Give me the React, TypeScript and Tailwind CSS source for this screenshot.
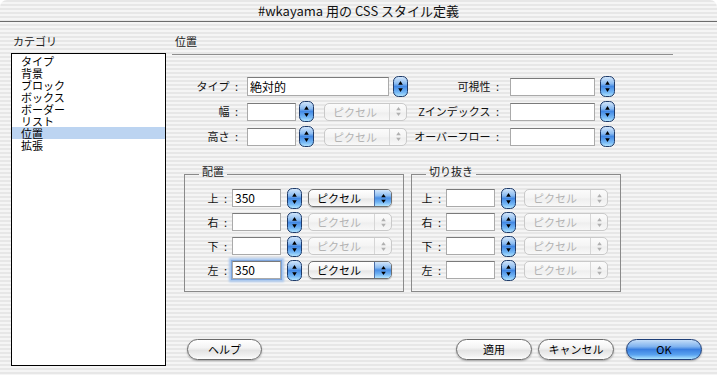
import React from "react";

const aqua =
  "bg-[image:linear-gradient(180deg,#d2e6fb_0%,#8dbdf2_35%,#4a8fe6_50%,#6fb2f3_75%,#b6e6ff_100%)]";

function Stepper() {
  return (
    <svg width="15" height="21" viewBox="0 0 15 21" className="shrink-0 block">
      <defs>
        <linearGradient id="stepg" x1="0" y1="0" x2="0" y2="1">
          <stop offset="0" stopColor="#d6e8fb" />
          <stop offset="0.35" stopColor="#8cbcf1" />
          <stop offset="0.5" stopColor="#4389e4" />
          <stop offset="0.8" stopColor="#77b9f5" />
          <stop offset="1" stopColor="#b8e8ff" />
        </linearGradient>
      </defs>
      <rect x="0.5" y="0.5" width="14" height="20" rx="5" fill="url(#stepg)" stroke="#1f3b69" />
      <path d="M7.5 5 L9.8 8.8 L5.2 8.8 Z" fill="#000" />
      <path d="M7.5 16 L9.8 12.2 L5.2 12.2 Z" fill="#000" />
    </svg>
  );
}

function SmallArrows({ color }: { color: string }) {
  return (
    <svg width="7" height="11" viewBox="0 0 7 11" className="block">
      <path d="M3.5 1 L5.8 4.2 L1.2 4.2 Z" fill={color} />
      <path d="M3.5 10 L5.8 6.8 L1.2 6.8 Z" fill={color} />
    </svg>
  );
}

function Popup({ enabled, w = 84 }: { enabled?: boolean; w?: number }) {
  if (enabled) {
    return (
      <div
        className="flex items-stretch h-[18px] rounded-[5px] border border-[#6f6f6f] overflow-hidden bg-[image:linear-gradient(180deg,#ffffff_0%,#f3f3f3_50%,#e6e6e6_55%,#fafafa_100%)] shadow-[0_1px_1px_rgba(0,0,0,0.25)] shrink-0"
        style={{ width: w }}
      >
        <span className="flex-1 pl-[8px] text-[11px] leading-[16px] text-black">ピクセル</span>
        <span className={`w-[17px] border-l border-[#4a6ea8] flex items-center justify-center ${aqua}`}>
          <SmallArrows color="#000" />
        </span>
      </div>
    );
  }
  return (
    <div
      className="flex items-stretch h-[18px] rounded-[5px] border border-[#c9c9c9] overflow-hidden bg-[image:linear-gradient(180deg,#fbfbfb_0%,#f4f4f4_50%,#eeeeee_55%,#f8f8f8_100%)] shrink-0"
      style={{ width: w }}
    >
      <span className="flex-1 pl-[8px] text-[11px] leading-[16px] text-[#b3b3b3]">ピクセル</span>
      <span className="w-[17px] border-l border-[#d6d6d6] flex items-center justify-center">
        <SmallArrows color="#b0b0b0" />
      </span>
    </div>
  );
}

function Input({ w, value, focused, h = 18 }: { w: number; value?: string; focused?: boolean; h?: number }) {
  return (
    <div
      className={`bg-white border border-[#aaaaaa] border-t-[#7a7a7a] px-[2px] text-[12px] text-black flex items-center shrink-0 ${
        focused ? "shadow-[0_0_0_1px_#7ea5dc,0_0_2px_3px_#aac8ee]" : ""
      }`}
      style={{ width: w, height: h }}
    >
      {value}
    </div>
  );
}

function Button({ label, primary, w = 76 }: { label: string; primary?: boolean; w?: number }) {
  return (
    <div
      className={`h-[21px] rounded-full flex items-center justify-center text-[11px] text-black shadow-[0_1px_2px_rgba(0,0,0,0.3)] ${
        primary
          ? "border border-[#1f3f78] bg-[image:linear-gradient(180deg,#c3ddf8_0%,#7fb2ef_35%,#3a7fe0_50%,#5aa3f0_78%,#b0e6ff_100%)]"
          : "border border-[#6a6a6a] bg-[image:linear-gradient(180deg,#ffffff_0%,#f4f4f4_40%,#e3e3e3_55%,#f2f2f2_85%,#ffffff_100%)]"
      }`}
      style={{ width: w }}
    >
      {label}
    </div>
  );
}

function TopLabel({ text, w, pr = 0 }: { text: string; w: number; pr?: number }) {
  return (
    <span
      className="text-[11px] text-right text-[#111] shrink-0 whitespace-nowrap"
      style={{ width: w, paddingRight: pr }}
    >
      {text}
      {"\u2002:"}
    </span>
  );
}

function GroupRow({ label, value, enabled, focused, popMl = 6 }: { label: string; value?: string; enabled?: boolean; focused?: boolean; popMl?: number }) {
  return (
    <div className="flex items-center h-[24px]">
      <TopLabel text={label} w={24} pr={2} />
      <div className="ml-[3px]">
        <Input w={49} value={value} focused={focused} />
      </div>
      <div className="ml-[6px]">
        <Stepper />
      </div>
      <div style={{ marginLeft: popMl }}>
        <Popup enabled={enabled} />
      </div>
    </div>
  );
}

export default function App() {
  const items = ["タイプ", "背景", "ブロック", "ボックス", "ボーダー", "リスト", "位置", "拡張"];
  return (
    <div className="w-[717px] h-[375px] overflow-hidden rounded-t-[7px] bg-[image:repeating-linear-gradient(180deg,#e7e7e7_0px,#e7e7e7_2px,#f5f5f5_2px,#f5f5f5_4px)] font-[family-name:'Noto_Sans_CJK_JP',sans-serif] text-black">
      <div className="h-[22px] border-b border-[#6b6b6b] flex items-center justify-center text-[13px] text-[#111]">
        #wkayama 用の CSS スタイル定義
      </div>
      <div className="flex">
        <div className="w-[172px] pl-[11px] pt-[12px] shrink-0">
          <div className="h-[14px] leading-[14px] text-[11px] pl-[2px] text-[#222]">カテゴリ</div>
          <div className="mt-[5px] w-[155px] h-[313px] border border-black bg-white pt-px">
            {items.map((it) => (
              <div
                key={it}
                className={`h-[12px] leading-[12px] text-[11px] pl-[9px] ${it === "位置" ? "bg-[#bcd4f1]" : ""}`}
              >
                {it}
              </div>
            ))}
          </div>
        </div>
        <div className="flex-1 pt-[12px]">
          <div className="h-[14px] leading-[14px] pl-[3px] text-[11px] text-[#222]">位置</div>
          <div className="mt-[6px] h-px w-[501px] bg-[#8e8e8e]" />
          <div className="mt-[19px] flex flex-col">
            <div className="flex items-center h-[25px]">
              <div className="w-[240px] flex items-center">
                <TopLabel text="タイプ" w={67} pr={1} />
                <div className="ml-[8px]">
                  <Input w={142} h={19} value="絶対的" />
                </div>
                <div className="ml-[4px]">
                  <Stepper />
                </div>
              </div>
              <div className="flex items-center">
                <TopLabel text="可視性" w={87} />
                <div className="ml-[11px]">
                  <Input w={85} />
                </div>
                <div className="ml-[5px]">
                  <Stepper />
                </div>
              </div>
            </div>
            <div className="flex items-center h-[25px]">
              <div className="w-[240px] flex items-center">
                <TopLabel text="幅" w={67} pr={1} />
                <div className="ml-[8px]">
                  <Input w={49} />
                </div>
                <div className="ml-[3px]">
                  <Stepper />
                </div>
                <div className="ml-[10px]">
                  <Popup w={83} />
                </div>
              </div>
              <div className="flex items-center">
                <TopLabel text="Zインデックス" w={87} />
                <div className="ml-[11px]">
                  <Input w={85} />
                </div>
                <div className="ml-[5px]">
                  <Stepper />
                </div>
              </div>
            </div>
            <div className="flex items-center h-[25px]">
              <div className="w-[240px] flex items-center">
                <TopLabel text="高さ" w={67} pr={1} />
                <div className="ml-[8px]">
                  <Input w={49} />
                </div>
                <div className="ml-[3px]">
                  <Stepper />
                </div>
                <div className="ml-[10px]">
                  <Popup w={83} />
                </div>
              </div>
              <div className="flex items-center">
                <TopLabel text="オーバーフロー" w={87} />
                <div className="ml-[11px]">
                  <Input w={85} />
                </div>
                <div className="ml-[5px]">
                  <Stepper />
                </div>
              </div>
            </div>
          </div>

          <div className="mt-[15px] ml-[12px] flex items-start">
            <fieldset className="w-[220px] border border-[#8a8a8a]">
              <legend className="ml-[14px] px-[3px] pb-[7px] text-[11px] leading-[14px] text-[#222]">配置</legend>
              <div className="pl-[20px] pt-[1px] pb-[9px]">
                <GroupRow label="上" value="350" enabled />
                <GroupRow label="右" />
                <GroupRow label="下" />
                <GroupRow label="左" value="350" enabled focused />
              </div>
            </fieldset>
            <fieldset className="ml-[7px] w-[210px] border border-[#8a8a8a]">
              <legend className="ml-[14px] px-[3px] pb-[7px] text-[11px] leading-[14px] text-[#222]">切り抜き</legend>
              <div className="pl-[7px] pt-[1px] pb-[9px]">
                <GroupRow label="上" popMl={8} />
                <GroupRow label="右" popMl={8} />
                <GroupRow label="下" popMl={8} />
                <GroupRow label="左" popMl={8} />
              </div>
            </fieldset>
          </div>

          <div className="mt-[47px] flex items-center pr-[15px]">
            <div className="ml-[15px]">
              <Button label="ヘルプ" w={75} />
            </div>
            <div className="ml-auto flex items-center">
              <Button label="適用" />
              <div className="ml-[6px]">
                <Button label="キャンセル" />
              </div>
              <div className="ml-[12px]">
                <Button label="OK" primary />
              </div>
            </div>
          </div>
        </div>
      </div>
    </div>
  );
}
